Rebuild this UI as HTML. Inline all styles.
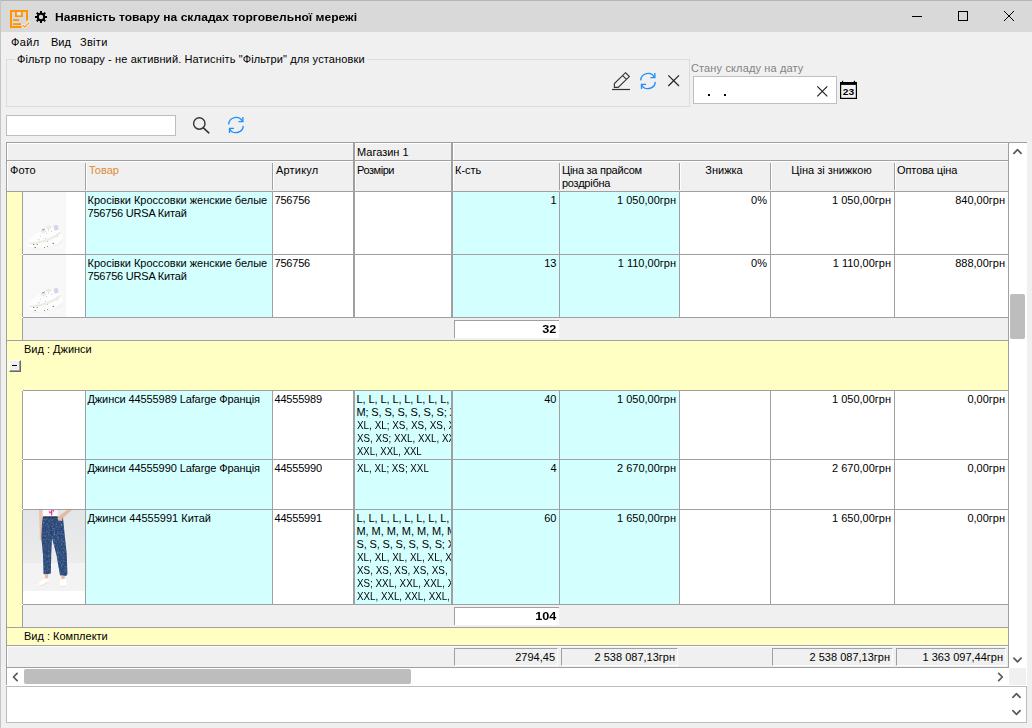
<!DOCTYPE html>
<html lang="uk"><head><meta charset="utf-8"><title>Наявність товару на складах торговельної мережі</title>
<style>
html,body{margin:0;padding:0}
body{width:1032px;height:728px;overflow:hidden;background:#F0F0F0;position:relative;
 font-family:"Liberation Sans",sans-serif;font-size:11px;line-height:13px;color:#000}
div,svg{position:absolute;box-sizing:border-box}
.t{white-space:nowrap}
.r{text-align:right}
.c{text-align:center}
.b{font-weight:bold}
.ln{background:#A0A0A0}
.cy{background:#D4FFFF}
.ye{background:#FFFFC4}
.wh{background:#fff}
.cell{overflow:hidden}
</style></head>
<body>
<div class="" style="left:0px;top:0px;width:1032px;height:32px;background:#D9D9D9;border-top:1px solid #B5B5B5"></div>
<div class="" style="left:0px;top:0px;width:1px;height:728px;background:#C4C4C4"></div>
<svg style="left:8px;top:8px" width="24" height="24" viewBox="8 8 24 24">
<g fill="#FF9500">
<rect x="10" y="10" width="2" height="18"/>
<rect x="10" y="10" width="18" height="2"/>
<rect x="26" y="10" width="2" height="10.5"/>
<rect x="10" y="26" width="11.5" height="2"/>
<rect x="15" y="12" width="1.8" height="5"/>
<rect x="21" y="12" width="1.8" height="5"/>
<rect x="15" y="15.3" width="7.8" height="1.7"/>
<rect x="13" y="19.2" width="6" height="1.8"/>
<rect x="13" y="23.2" width="8" height="1.8"/>
</g>
<rect x="17" y="12" width="4" height="3.2" fill="#DCE6F2"/>
<path d="M22.8 25.2 L24.8 27 L29.2 22.6" fill="none" stroke="#fff" stroke-width="2.4" stroke-linecap="round" stroke-linejoin="round"/>
<path d="M22.8 25.2 L24.8 27 L29.2 22.6" fill="none" stroke="#FF9500" stroke-width="1.2" stroke-linecap="round" stroke-linejoin="round"/>
</svg>
<svg style="left:33px;top:9px" width="16" height="16" viewBox="33 9 16 16"><path d="M40.00 12.82 L40.05 10.98 L41.95 10.98 L42.00 12.82 L43.25 13.33 L44.59 12.06 L45.94 13.41 L44.67 14.75 L45.18 16.00 L47.02 16.05 L47.02 17.95 L45.18 18.00 L44.67 19.25 L45.94 20.59 L44.59 21.94 L43.25 20.67 L42.00 21.18 L41.95 23.02 L40.05 23.02 L40.00 21.18 L38.75 20.67 L37.41 21.94 L36.06 20.59 L37.33 19.25 L36.82 18.00 L34.98 17.95 L34.98 16.05 L36.82 16.00 L37.33 14.75 L36.06 13.41 L37.41 12.06 L38.75 13.33Z M38.80 17.00 a2.2 2.2 0 1 0 4.4 0 a2.2 2.2 0 1 0 -4.4 0Z" fill="#000" fill-rule="evenodd"/></svg>
<div class="t b" style="left:55px;top:11px;transform-origin:0 0;transform:scaleX(1.097)">Наявність товару на складах торговельної мережі</div>
<div class="" style="left:912px;top:16px;width:10px;height:1px;background:#000"></div>
<div class="" style="left:958px;top:11px;width:10px;height:10px;border:1px solid #000"></div>
<svg style="left:1003px;top:10px" width="12" height="12" viewBox="0 0 12 12"><path d="M1 1 L11 11 M11 1 L1 11" stroke="#000" stroke-width="1" fill="none"/></svg>
<div class="t " style="left:11px;top:36px;letter-spacing:0.4px">Файл</div>
<div class="t " style="left:51px;top:36px;">Вид</div>
<div class="t " style="left:80px;top:36px;letter-spacing:0.3px">Звіти</div>
<div class="" style="left:6px;top:59px;width:684px;height:48px;border:1px solid #DCDCDC"></div>
<div class="t " style="left:15px;top:53px;background:#F0F0F0;padding:0 2px;letter-spacing:0.13px">Фільтр по товару - не активний. Натисніть "Фільтри" для установки</div>
<svg style="left:610px;top:70px" width="22" height="22" viewBox="610 70 22 22">
<path d="M625.5 72.7 L629.3 76.6 L618.2 87.4 L614.4 87.4 L614.4 83.6 Z M622.7 75.6 L626.5 79.4" fill="none" stroke="#333" stroke-width="1.15" stroke-linejoin="miter"/>
<rect x="612" y="88.9" width="18" height="1.2" fill="#333"/>
</svg>
<svg style="left:637px;top:69.7px" width="22" height="22" viewBox="-11 -11 22 22">
<g fill="none" stroke="#1E8FFF" stroke-width="1.3" stroke-linecap="butt" stroke-linejoin="miter">
<path d="M-7.3 -0.6 A7.3 7.3 0 0 1 6.6 -3.4"/>
<path d="M7.3 0.9 A7.3 7.3 0 0 1 -6.6 3.4"/>
<path d="M6.9 -8 L6.9 -3.4 L2.4 -3.4"/>
<path d="M-6.5 8 L-6.5 3.4 L-2 3.4"/>
</g></svg>
<svg style="left:666px;top:73px" width="16" height="16" viewBox="666 73 16 16"><path d="M668.3 75.3 L679 86 M679 75.3 L668.3 86" stroke="#222" stroke-width="1.2" fill="none"/></svg>
<div class="t " style="left:691px;top:62px;color:#838383;letter-spacing:0.13px">Стану складу на дату</div>
<div class="wh" style="left:693px;top:76px;width:144px;height:28px;border:1px solid #BFBFBF"></div>
<div class="" style="left:708px;top:94px;width:1.5px;height:2px;background:#000"></div>
<div class="" style="left:724px;top:94px;width:1.5px;height:2px;background:#000"></div>
<svg style="left:815px;top:84px" width="14" height="14" viewBox="815 84 14 14"><path d="M817.3 86.3 L827.3 96.3 M827.3 86.3 L817.3 96.3" stroke="#222" stroke-width="1.2" fill="none"/></svg>
<svg style="left:839px;top:80px" width="20" height="20" viewBox="839 80 20 20">
<rect x="840.6" y="82.6" width="15.8" height="15.8" fill="#F2F2F2" stroke="#000" stroke-width="1.2"/>
<rect x="840" y="82" width="17" height="2.9" fill="#000"/>
<rect x="841.9" y="80.8" width="1.3" height="2" fill="#000"/><rect x="853.8" y="80.8" width="1.3" height="2" fill="#000"/>
<text x="848.5" y="95.1" font-family="Liberation Sans, sans-serif" font-size="8.5" font-weight="bold" text-anchor="middle" textLength="11.4" lengthAdjust="spacingAndGlyphs" fill="#000">23</text>
</svg>
<div class="wh" style="left:6px;top:115px;width:170px;height:21px;border:1px solid #BDBDBD"></div>
<svg style="left:190px;top:114px" width="22" height="22" viewBox="190 114 22 22">
<circle cx="199.3" cy="123.5" r="5.7" fill="none" stroke="#333" stroke-width="1.4"/>
<path d="M203.4 127.8 L208.8 132.8" stroke="#333" stroke-width="1.6" stroke-linecap="round"/></svg>
<svg style="left:225px;top:114px" width="22" height="22" viewBox="-11 -11 22 22">
<g fill="none" stroke="#1E8FFF" stroke-width="1.3" stroke-linecap="butt" stroke-linejoin="miter">
<path d="M-7.3 -0.6 A7.3 7.3 0 0 1 6.6 -3.4"/>
<path d="M7.3 0.9 A7.3 7.3 0 0 1 -6.6 3.4"/>
<path d="M6.9 -8 L6.9 -3.4 L2.4 -3.4"/>
<path d="M-6.5 8 L-6.5 3.4 L-2 3.4"/>
</g></svg>
<div class="wh" style="left:6px;top:142px;width:1021px;height:544px;"></div>
<div class="" style="left:6px;top:142px;width:1021px;height:1px;background:#A0A0A0;"></div>
<div class="" style="left:6px;top:142px;width:1px;height:543px;background:#A0A0A0;"></div>
<div class="" style="left:7px;top:143px;width:1001px;height:48px;background:#F0F0F0"></div>
<div class="" style="left:7px;top:143px;width:1002px;height:1px;background:#fff;"></div>
<div class="ln" style="left:7px;top:160px;width:1002px;height:1px;"></div>
<div class="" style="left:7px;top:161px;width:1002px;height:1px;background:#fff;"></div>
<div class="ln" style="left:7px;top:191px;width:1002px;height:1px;"></div>
<div class="" style="left:7px;top:143px;width:1px;height:17px;background:#fff;"></div>
<div class="" style="left:7px;top:161px;width:1px;height:30px;background:#fff;"></div>
<div class="ln" style="left:1008px;top:143px;width:1px;height:525px;"></div>
<div class="ln" style="left:353px;top:143px;width:2px;height:48px;"></div>
<div class="" style="left:355px;top:143px;width:1px;height:17px;background:#fff;"></div>
<div class="" style="left:355px;top:161px;width:1px;height:30px;background:#fff;"></div>
<div class="ln" style="left:451px;top:143px;width:2px;height:48px;"></div>
<div class="" style="left:453px;top:143px;width:1px;height:17px;background:#fff;"></div>
<div class="" style="left:453px;top:161px;width:1px;height:30px;background:#fff;"></div>
<div class="t " style="left:357px;top:146px;">Магазин 1</div>
<div class="ln" style="left:85px;top:163px;width:1px;height:27px;"></div>
<div class="" style="left:86px;top:163px;width:1px;height:27px;background:#fff;"></div>
<div class="ln" style="left:272px;top:163px;width:1px;height:27px;"></div>
<div class="" style="left:273px;top:163px;width:1px;height:27px;background:#fff;"></div>
<div class="ln" style="left:559px;top:163px;width:1px;height:27px;"></div>
<div class="" style="left:560px;top:163px;width:1px;height:27px;background:#fff;"></div>
<div class="ln" style="left:679px;top:163px;width:1px;height:27px;"></div>
<div class="" style="left:680px;top:163px;width:1px;height:27px;background:#fff;"></div>
<div class="ln" style="left:770px;top:163px;width:1px;height:27px;"></div>
<div class="" style="left:771px;top:163px;width:1px;height:27px;background:#fff;"></div>
<div class="ln" style="left:894px;top:163px;width:1px;height:27px;"></div>
<div class="" style="left:895px;top:163px;width:1px;height:27px;background:#fff;"></div>
<div class="t " style="left:10px;top:164px;letter-spacing:0.1px">Фото</div>
<div class="t " style="left:89px;top:164px;color:#DC8C38">Товар</div>
<div class="t " style="left:276px;top:164px;letter-spacing:0.2px">Артикул</div>
<div class="t " style="left:357px;top:164px;letter-spacing:-0.45px">Розміри</div>
<div class="t " style="left:455px;top:164px;">К-сть</div>
<div class="t" style="left:562px;top:164px;letter-spacing:-0.25px">Ціна за прайсом<br>роздрібна</div>
<div class="t c" style="left:679px;top:164px;width:90px;">Знижка</div>
<div class="t c" style="left:770px;top:164px;width:123px;">Ціна зі знижкою</div>
<div class="t " style="left:897px;top:164px;letter-spacing:-0.1px">Оптова ціна</div>
<div class="ye" style="left:7px;top:192px;width:15px;height:149px;"></div>
<div class="cell wh" style="left:23px;top:192px;width:62px;height:62px;"><svg style="left:0;top:0" width="43" height="62" viewBox="23 192 43 62">
<rect x="23" y="192" width="43" height="62" fill="#F8F8F8"/>
<path d="M29 246.5 Q38 251 50 247.5 Q60 244 63.5 239 L62 243 Q50 249.5 38 249.8 Q31 249.5 29 246.5Z" fill="#EEF0F0"/>
<path d="M27 243 Q28 239.5 32 237 L38 232 L44.5 227 Q47 224.6 49.5 225.4 L52.5 227.5 L54 225.6 L57.6 225 Q59.5 228 60.5 231 Q63.4 234 63 238 Q60.5 242.5 50.5 246.5 Q40 249.3 31.5 247.8 Q27 246.5 27 243Z" fill="#FDFDFE"/>
<path d="M53.6 225.6 L57.6 225 L58.8 229.4 L54.6 230.8Z" fill="#D3D7E4"/>
<path d="M28.5 242.5 Q37 242.5 46 239.5 Q54 236.5 60 231.5 L61 233.5 Q55 238.5 47 241.6 Q38 244.5 29 244.3Z" fill="#EFECE2"/>
<path d="M45 227 L49 225.2 L52.4 227.6 L48.5 229.5Z M40 231.5 L43.5 229 L47 231 L43.5 233.5Z" fill="#EEEBE0"/>
<g fill="#5A5C68"><rect x="42.3" y="229.3" width="1.5" height=".9"/><rect x="44" y="228.6" width=".8" height=".7"/><rect x="52.6" y="242.9" width="1.4" height=".9"/><rect x="33" y="244.1" width="1.2" height=".8"/><rect x="36.6" y="244.2" width="1.2" height=".7"/><rect x="34.4" y="247.2" width="1.6" height=".7"/><rect x="44" y="247.1" width=".9" height=".8"/><rect x="47.2" y="246" width=".9" height=".8"/></g>
<g fill="#A8ABB8"><rect x="48.2" y="229.7" width=".8" height=".8"/><rect x="51.2" y="231.2" width=".8" height=".8"/><rect x="38.3" y="239.3" width="1" height="1"/><rect x="45.2" y="238.2" width=".8" height=".8"/><rect x="47.2" y="241.2" width=".8" height=".8"/><rect x="57.2" y="235.8" width=".8" height=".8"/><rect x="46" y="233" width=".7" height=".7"/><rect x="40.2" y="235.8" width=".7" height=".7"/></g>
</svg></div>
<div class="cell cy" style="left:86px;top:192px;width:186px;height:62px;"><div style="left:1.5px;top:2px;width:185px;letter-spacing:0px">Кросівки Кроссовки женские белые <span style="letter-spacing:-0.2px">756756 URSA Китай</span></div></div>
<div class="cell wh" style="left:273px;top:192px;width:80px;height:62px;"><div style="left:1.5px;top:2px;width:79px;letter-spacing:-0.2px">756756</div></div>
<div class="cell wh" style="left:355px;top:192px;width:96px;height:62px;"></div>
<div class="cell cy" style="left:453px;top:192px;width:106px;height:62px;"><div class="t r" style="right:2.5px;top:2px">1</div></div>
<div class="cell cy" style="left:560px;top:192px;width:119px;height:62px;"><div class="t r" style="right:3px;top:2px">1 050,00грн</div></div>
<div class="cell wh" style="left:680px;top:192px;width:90px;height:62px;"><div class="t r" style="right:3px;top:2px">0%</div></div>
<div class="cell wh" style="left:771px;top:192px;width:123px;height:62px;"><div class="t r" style="right:3px;top:2px">1 050,00грн</div></div>
<div class="cell wh" style="left:895px;top:192px;width:113px;height:62px;"><div class="t r" style="right:3px;top:2px">840,00грн</div></div>
<div class="ln" style="left:22px;top:192px;width:1px;height:62px;"></div>
<div class="ln" style="left:85px;top:192px;width:1px;height:62px;"></div>
<div class="ln" style="left:272px;top:192px;width:1px;height:62px;"></div>
<div class="ln" style="left:353px;top:192px;width:2px;height:62px;"></div>
<div class="ln" style="left:451px;top:192px;width:2px;height:62px;"></div>
<div class="ln" style="left:559px;top:192px;width:1px;height:62px;"></div>
<div class="ln" style="left:679px;top:192px;width:1px;height:62px;"></div>
<div class="ln" style="left:770px;top:192px;width:1px;height:62px;"></div>
<div class="ln" style="left:894px;top:192px;width:1px;height:62px;"></div>
<div class="ln" style="left:23px;top:254px;width:986px;height:1px;"></div>
<div class="cell wh" style="left:23px;top:255px;width:62px;height:62px;"><svg style="left:0;top:0" width="43" height="62" viewBox="23 192 43 62">
<rect x="23" y="192" width="43" height="62" fill="#F8F8F8"/>
<path d="M29 246.5 Q38 251 50 247.5 Q60 244 63.5 239 L62 243 Q50 249.5 38 249.8 Q31 249.5 29 246.5Z" fill="#EEF0F0"/>
<path d="M27 243 Q28 239.5 32 237 L38 232 L44.5 227 Q47 224.6 49.5 225.4 L52.5 227.5 L54 225.6 L57.6 225 Q59.5 228 60.5 231 Q63.4 234 63 238 Q60.5 242.5 50.5 246.5 Q40 249.3 31.5 247.8 Q27 246.5 27 243Z" fill="#FDFDFE"/>
<path d="M53.6 225.6 L57.6 225 L58.8 229.4 L54.6 230.8Z" fill="#D3D7E4"/>
<path d="M28.5 242.5 Q37 242.5 46 239.5 Q54 236.5 60 231.5 L61 233.5 Q55 238.5 47 241.6 Q38 244.5 29 244.3Z" fill="#EFECE2"/>
<path d="M45 227 L49 225.2 L52.4 227.6 L48.5 229.5Z M40 231.5 L43.5 229 L47 231 L43.5 233.5Z" fill="#EEEBE0"/>
<g fill="#5A5C68"><rect x="42.3" y="229.3" width="1.5" height=".9"/><rect x="44" y="228.6" width=".8" height=".7"/><rect x="52.6" y="242.9" width="1.4" height=".9"/><rect x="33" y="244.1" width="1.2" height=".8"/><rect x="36.6" y="244.2" width="1.2" height=".7"/><rect x="34.4" y="247.2" width="1.6" height=".7"/><rect x="44" y="247.1" width=".9" height=".8"/><rect x="47.2" y="246" width=".9" height=".8"/></g>
<g fill="#A8ABB8"><rect x="48.2" y="229.7" width=".8" height=".8"/><rect x="51.2" y="231.2" width=".8" height=".8"/><rect x="38.3" y="239.3" width="1" height="1"/><rect x="45.2" y="238.2" width=".8" height=".8"/><rect x="47.2" y="241.2" width=".8" height=".8"/><rect x="57.2" y="235.8" width=".8" height=".8"/><rect x="46" y="233" width=".7" height=".7"/><rect x="40.2" y="235.8" width=".7" height=".7"/></g>
</svg></div>
<div class="cell cy" style="left:86px;top:255px;width:186px;height:62px;"><div style="left:1.5px;top:2px;width:185px;letter-spacing:0px">Кросівки Кроссовки женские белые <span style="letter-spacing:-0.2px">756756 URSA Китай</span></div></div>
<div class="cell wh" style="left:273px;top:255px;width:80px;height:62px;"><div style="left:1.5px;top:2px;width:79px;letter-spacing:-0.2px">756756</div></div>
<div class="cell wh" style="left:355px;top:255px;width:96px;height:62px;"></div>
<div class="cell cy" style="left:453px;top:255px;width:106px;height:62px;"><div class="t r" style="right:2.5px;top:2px">13</div></div>
<div class="cell cy" style="left:560px;top:255px;width:119px;height:62px;"><div class="t r" style="right:3px;top:2px">1 110,00грн</div></div>
<div class="cell wh" style="left:680px;top:255px;width:90px;height:62px;"><div class="t r" style="right:3px;top:2px">0%</div></div>
<div class="cell wh" style="left:771px;top:255px;width:123px;height:62px;"><div class="t r" style="right:3px;top:2px">1 110,00грн</div></div>
<div class="cell wh" style="left:895px;top:255px;width:113px;height:62px;"><div class="t r" style="right:3px;top:2px">888,00грн</div></div>
<div class="ln" style="left:22px;top:255px;width:1px;height:62px;"></div>
<div class="ln" style="left:85px;top:255px;width:1px;height:62px;"></div>
<div class="ln" style="left:272px;top:255px;width:1px;height:62px;"></div>
<div class="ln" style="left:353px;top:255px;width:2px;height:62px;"></div>
<div class="ln" style="left:451px;top:255px;width:2px;height:62px;"></div>
<div class="ln" style="left:559px;top:255px;width:1px;height:62px;"></div>
<div class="ln" style="left:679px;top:255px;width:1px;height:62px;"></div>
<div class="ln" style="left:770px;top:255px;width:1px;height:62px;"></div>
<div class="ln" style="left:894px;top:255px;width:1px;height:62px;"></div>
<div class="ln" style="left:23px;top:317px;width:986px;height:1px;"></div>
<div class="" style="left:23px;top:318px;width:985px;height:22px;background:#F0F0F0"></div>
<div class="ln" style="left:22px;top:318px;width:1px;height:22px;"></div>
<div class="wh" style="left:454px;top:320px;width:105px;height:18px;border-top:1px solid #A0A0A0;border-left:1px solid #A0A0A0"><div class="t r b" style="right:2.6px;top:2px;transform-origin:100% 0;transform:scaleX(1.15)">32</div></div>
<div class="ln" style="left:7px;top:340px;width:1002px;height:1px;"></div>
<div class="ye" style="left:7px;top:341px;width:1001px;height:50px;"></div>
<div class="t " style="left:24px;top:343px;">Вид : Джинси</div>
<div class="" style="left:9px;top:360px;width:12px;height:12px;background:#F0F0F0;border-top:1px solid #fff;border-left:1px solid #fff;border-right:1px solid #696969;border-bottom:1px solid #696969;box-shadow:inset -1px -1px 0 #A0A0A0"><div style="left:2px;top:4px;width:5px;height:1px;background:#000"></div></div>
<div class="ln" style="left:23px;top:390px;width:986px;height:1px;"></div>
<div class="ye" style="left:7px;top:391px;width:15px;height:237px;"></div>
<div class="cell wh" style="left:23px;top:391px;width:62px;height:68px;"></div>
<div class="cell cy" style="left:86px;top:391px;width:186px;height:68px;"><div style="left:1.5px;top:2px;width:185px;letter-spacing:0px"><span style="letter-spacing:-0.1px">Джинси 44555989 Lafarge Франція</span></div></div>
<div class="cell wh" style="left:273px;top:391px;width:80px;height:68px;"><div style="left:1.5px;top:2px;width:79px;letter-spacing:-0.2px">44555989</div></div>
<div class="cell cy" style="left:355px;top:391px;width:96px;height:68px;"><div class="t" style="left:1.5px;top:2px"><span style="letter-spacing:-0.09px">L, L, L, L, L, L, L, L, L,</span><br><span style="letter-spacing:-0.14px">M; S, S, S, S, S, S; XL,</span><br><span style="display:inline-block;transform-origin:0 0;transform:scaleX(0.901)">XL, XL; XS, XS, XS, XS,</span><br><span style="display:inline-block;transform-origin:0 0;transform:scaleX(0.89)">XS, XS; XXL, XXL, XXL,</span><br><span style="display:inline-block;transform-origin:0 0;transform:scaleX(0.8666)">XXL, XXL, XXL</span></div></div>
<div class="cell cy" style="left:453px;top:391px;width:106px;height:68px;"><div class="t r" style="right:2.5px;top:2px">40</div></div>
<div class="cell cy" style="left:560px;top:391px;width:119px;height:68px;"><div class="t r" style="right:3px;top:2px">1 050,00грн</div></div>
<div class="cell wh" style="left:680px;top:391px;width:90px;height:68px;"></div>
<div class="cell wh" style="left:771px;top:391px;width:123px;height:68px;"><div class="t r" style="right:3px;top:2px">1 050,00грн</div></div>
<div class="cell wh" style="left:895px;top:391px;width:113px;height:68px;"><div class="t r" style="right:3px;top:2px">0,00грн</div></div>
<div class="ln" style="left:22px;top:391px;width:1px;height:68px;"></div>
<div class="ln" style="left:85px;top:391px;width:1px;height:68px;"></div>
<div class="ln" style="left:272px;top:391px;width:1px;height:68px;"></div>
<div class="ln" style="left:353px;top:391px;width:2px;height:68px;"></div>
<div class="ln" style="left:451px;top:391px;width:2px;height:68px;"></div>
<div class="ln" style="left:559px;top:391px;width:1px;height:68px;"></div>
<div class="ln" style="left:679px;top:391px;width:1px;height:68px;"></div>
<div class="ln" style="left:770px;top:391px;width:1px;height:68px;"></div>
<div class="ln" style="left:894px;top:391px;width:1px;height:68px;"></div>
<div class="ln" style="left:23px;top:459px;width:986px;height:1px;"></div>
<div class="cell wh" style="left:23px;top:460px;width:62px;height:49px;"></div>
<div class="cell cy" style="left:86px;top:460px;width:186px;height:49px;"><div style="left:1.5px;top:2px;width:185px;letter-spacing:0px"><span style="letter-spacing:-0.1px">Джинси 44555990 Lafarge Франція</span></div></div>
<div class="cell wh" style="left:273px;top:460px;width:80px;height:49px;"><div style="left:1.5px;top:2px;width:79px;letter-spacing:-0.2px">44555990</div></div>
<div class="cell cy" style="left:355px;top:460px;width:96px;height:49px;"><div class="t" style="left:1.5px;top:2px"><span style="display:inline-block;transform-origin:0 0;transform:scaleX(0.89)">XL, XL; XS; XXL</span></div></div>
<div class="cell cy" style="left:453px;top:460px;width:106px;height:49px;"><div class="t r" style="right:2.5px;top:2px">4</div></div>
<div class="cell cy" style="left:560px;top:460px;width:119px;height:49px;"><div class="t r" style="right:3px;top:2px">2 670,00грн</div></div>
<div class="cell wh" style="left:680px;top:460px;width:90px;height:49px;"></div>
<div class="cell wh" style="left:771px;top:460px;width:123px;height:49px;"><div class="t r" style="right:3px;top:2px">2 670,00грн</div></div>
<div class="cell wh" style="left:895px;top:460px;width:113px;height:49px;"><div class="t r" style="right:3px;top:2px">0,00грн</div></div>
<div class="ln" style="left:22px;top:460px;width:1px;height:49px;"></div>
<div class="ln" style="left:85px;top:460px;width:1px;height:49px;"></div>
<div class="ln" style="left:272px;top:460px;width:1px;height:49px;"></div>
<div class="ln" style="left:353px;top:460px;width:2px;height:49px;"></div>
<div class="ln" style="left:451px;top:460px;width:2px;height:49px;"></div>
<div class="ln" style="left:559px;top:460px;width:1px;height:49px;"></div>
<div class="ln" style="left:679px;top:460px;width:1px;height:49px;"></div>
<div class="ln" style="left:770px;top:460px;width:1px;height:49px;"></div>
<div class="ln" style="left:894px;top:460px;width:1px;height:49px;"></div>
<div class="ln" style="left:23px;top:509px;width:986px;height:1px;"></div>
<div class="cell wh" style="left:23px;top:510px;width:62px;height:94px;"><svg style="left:0;top:0" width="62" height="81" viewBox="0 0 62 81">
<defs>
<linearGradient id="jbg" x1="0" y1="0" x2="0" y2="1"><stop offset="0" stop-color="#E4E5E7"/><stop offset="1" stop-color="#ECECEC"/></linearGradient>
<filter id="mot" x="0" y="0" width="100%" height="100%" color-interpolation-filters="sRGB"><feTurbulence type="fractalNoise" baseFrequency="0.55" numOctaves="2" seed="7" result="n"/>
<feColorMatrix in="n" type="matrix" values="0 0 0 0 0.34  0 0 0 0 0.48  0 0 0 0 0.68  1.3 1.3 1.3 0 -1.75" result="c"/>
<feComposite in="c" in2="SourceGraphic" operator="in" result="d"/><feMerge><feMergeNode in="SourceGraphic"/><feMergeNode in="d"/></feMerge></filter>
</defs>
<rect width="62" height="54" fill="url(#jbg)"/>
<rect y="53" width="62" height="28" fill="#F3F3F3"/>
<path d="M16 0 L20.5 0 L20.5 25 Q20 31 18 30.5 Q16 29 16.8 24 Z" fill="#E7C4B2"/>
<path d="M44 0 L49 0 L40.5 7.5 L39 11.5 L34.5 11 L34.5 7 Z" fill="#E3BCA8"/>
<path d="M19.5 0 L34.5 0 L34.5 6.8 L19.8 7 Z" fill="#FBFBFB"/>
<path d="M25.5 0 L27.5 2.5 L28 0 L29.5 0 L29.2 5.5 L28.2 5.5 L28 3 L26.5 3.5 Z M30 0 L31.3 0 L30.8 2.5 Z" fill="#F02E9C"/>
<g filter="url(#mot)">
<path d="M20 6.6 L34.5 6.4 L35 10.5 L39 11 L39.8 7 L40.6 14 L42 28 L43.8 45 L44.4 64 Q44.3 66.3 41 66 L37 65.2 L33.5 45 L29 28 L28.2 45 L27.8 63.5 Q24 64.8 20.6 64 L20 45 L18.4 28 L19 14 Z" fill="#2A4673"/>
</g>
<path d="M20 6.6 L34.5 6.4 L34.6 8 L20 8.3 Z" fill="#22375C" opacity=".8"/>
<path d="M27.8 9 L28.6 26" stroke="#22375C" stroke-width=".7" opacity=".7"/>
<g fill="#8A5A3A"><rect x="21.3" y="8.5" width=".9" height=".9"/><rect x="28" y="10" width=".9" height=".9"/><rect x="28.2" y="13" width=".9" height=".9"/><rect x="28.4" y="16" width=".9" height=".9"/></g>
<path d="M21.8 64 L25.4 64 L25 69 L22.3 69 Z M38.3 65.4 L41.9 65.8 L41.6 69.5 L38.6 69.5 Z" fill="#E3BCA8"/>
<path d="M15.5 75 Q16 71.5 21 69.3 Q23.5 67.8 25.3 68.6 L25.6 71.5 Q22 75 17 76.8 Q15.3 76.8 15.5 75 Z" fill="#FFFFFF"/>
<path d="M37 70.5 Q39.5 68.3 42.5 69 Q44.3 72 43.6 76.5 Q41 78 38 77 Q36.3 74 37 70.5 Z" fill="#FFFFFF"/>
<path d="M16 76 Q20 75.5 25.5 71.8 M37.5 76.3 Q40.5 77.3 43.4 76" stroke="#D9D2CC" stroke-width=".7" fill="none"/>
</svg></div>
<div class="cell cy" style="left:86px;top:510px;width:186px;height:94px;"><div style="left:1.5px;top:2px;width:185px;letter-spacing:0px">Джинси 44555991 Китай</div></div>
<div class="cell wh" style="left:273px;top:510px;width:80px;height:94px;"><div style="left:1.5px;top:2px;width:79px;letter-spacing:-0.2px">44555991</div></div>
<div class="cell cy" style="left:355px;top:510px;width:96px;height:94px;"><div class="t" style="left:1.5px;top:2px"><span style="letter-spacing:-0.09px">L, L, L, L, L, L, L, L, L,</span><br><span style="letter-spacing:-0.06px">M, M, M, M, M, M, M, M,</span><br><span style="letter-spacing:-0.14px">S, S, S, S, S, S, S; XL,</span><br><span style="display:inline-block;transform-origin:0 0;transform:scaleX(0.901)">XL, XL, XL, XL, XL, XL;</span><br><span style="display:inline-block;transform-origin:0 0;transform:scaleX(0.899)">XS, XS, XS, XS, XS, XS,</span><br><span style="display:inline-block;transform-origin:0 0;transform:scaleX(0.893)">XS; XXL, XXL, XXL, XXL,</span><br><span style="display:inline-block;transform-origin:0 0;transform:scaleX(0.8875)">XXL, XXL, XXL, XXL, XXL</span></div></div>
<div class="cell cy" style="left:453px;top:510px;width:106px;height:94px;"><div class="t r" style="right:2.5px;top:2px">60</div></div>
<div class="cell cy" style="left:560px;top:510px;width:119px;height:94px;"><div class="t r" style="right:3px;top:2px">1 650,00грн</div></div>
<div class="cell wh" style="left:680px;top:510px;width:90px;height:94px;"></div>
<div class="cell wh" style="left:771px;top:510px;width:123px;height:94px;"><div class="t r" style="right:3px;top:2px">1 650,00грн</div></div>
<div class="cell wh" style="left:895px;top:510px;width:113px;height:94px;"><div class="t r" style="right:3px;top:2px">0,00грн</div></div>
<div class="ln" style="left:22px;top:510px;width:1px;height:94px;"></div>
<div class="ln" style="left:85px;top:510px;width:1px;height:94px;"></div>
<div class="ln" style="left:272px;top:510px;width:1px;height:94px;"></div>
<div class="ln" style="left:353px;top:510px;width:2px;height:94px;"></div>
<div class="ln" style="left:451px;top:510px;width:2px;height:94px;"></div>
<div class="ln" style="left:559px;top:510px;width:1px;height:94px;"></div>
<div class="ln" style="left:679px;top:510px;width:1px;height:94px;"></div>
<div class="ln" style="left:770px;top:510px;width:1px;height:94px;"></div>
<div class="ln" style="left:894px;top:510px;width:1px;height:94px;"></div>
<div class="ln" style="left:23px;top:604px;width:986px;height:1px;"></div>
<div class="" style="left:23px;top:605px;width:985px;height:22px;background:#F0F0F0"></div>
<div class="ln" style="left:22px;top:605px;width:1px;height:22px;"></div>
<div class="wh" style="left:454px;top:607px;width:105px;height:18px;border-top:1px solid #A0A0A0;border-left:1px solid #A0A0A0"><div class="t r b" style="right:2.6px;top:2px;transform-origin:100% 0;transform:scaleX(1.15)">104</div></div>
<div class="ln" style="left:7px;top:627px;width:1002px;height:1px;"></div>
<div class="ye" style="left:7px;top:628px;width:1001px;height:17px;"></div>
<div class="t " style="left:24px;top:630px;">Вид : Комплекти</div>
<div class="ln" style="left:7px;top:645px;width:1002px;height:1px;"></div>
<div class="" style="left:7px;top:646px;width:1001px;height:21px;background:#F0F0F0;border-top:1px solid #fff;border-left:1px solid #fff"></div>
<div class="" style="left:454px;top:648px;width:104px;height:18px;border-top:1px solid #A0A0A0;border-left:1px solid #A0A0A0;border-right:1px solid #fff;border-bottom:1px solid #fff"><div class="t r" style="right:2px;top:2px">2794,45</div></div>
<div class="" style="left:561px;top:648px;width:117px;height:18px;border-top:1px solid #A0A0A0;border-left:1px solid #A0A0A0;border-right:1px solid #fff;border-bottom:1px solid #fff"><div class="t r" style="right:2px;top:2px">2 538 087,13грн</div></div>
<div class="" style="left:772px;top:648px;width:121px;height:18px;border-top:1px solid #A0A0A0;border-left:1px solid #A0A0A0;border-right:1px solid #fff;border-bottom:1px solid #fff"><div class="t r" style="right:2px;top:2px">2 538 087,13грн</div></div>
<div class="" style="left:896px;top:648px;width:110px;height:18px;border-top:1px solid #A0A0A0;border-left:1px solid #A0A0A0;border-right:1px solid #fff;border-bottom:1px solid #fff"><div class="t r" style="right:2px;top:2px">1 363 097,44грн</div></div>
<div class="ln" style="left:7px;top:667px;width:1002px;height:1px;"></div>
<div class="" style="left:1010px;top:294px;width:15px;height:45px;background:#BDBDBD;border-radius:2px"></div>
<div class="" style="left:24px;top:669px;width:387px;height:15px;background:#BDBDBD;border-radius:2px"></div>
<div class="" style="left:1009px;top:668px;width:17px;height:17px;background:#F0F0F0"></div>
<div class="wh" style="left:6px;top:686px;width:1021px;height:37px;border:1px solid #BDBDBD"></div>
<svg style="left:0;top:0;pointer-events:none" width="1032" height="728"><path d="M1013.9 153.3 L1017.5 149.7 L1021.1 153.3 M1013.9 658.2 L1017.5 661.8 L1021.1 658.2 M17.1 673.4 L13.5 677 L17.1 680.6 M998.7 673.4 L1002.3 677 L998.7 680.6 M1012.9 697.3 L1016.5 693.7 L1020.1 697.3 M1012.9 710.7 L1016.5 714.3 L1020.1 710.7" fill="none" stroke="#5A5A5A" stroke-width="1.7" stroke-linecap="round" stroke-linejoin="round"/></svg>
</body></html>
